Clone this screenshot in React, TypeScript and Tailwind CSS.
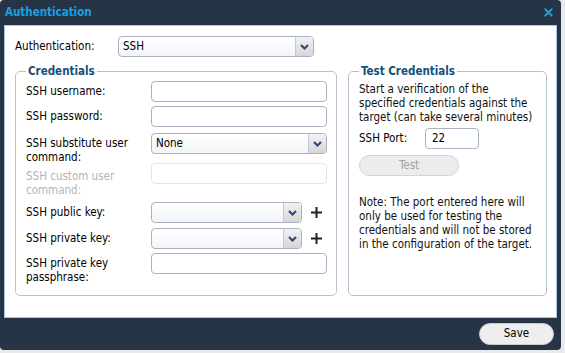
import { X } from "lucide-react";

const font = "font-['DejaVu_Sans_Condensed','Liberation_Sans',sans-serif]";

function Chevron() {
  return (
    <svg width="9" height="6" viewBox="0 0 9 6">
      <polyline points="1,1 4.5,4.5 8,1" fill="none" stroke="#2b4a86" strokeWidth="2.2" />
    </svg>
  );
}

function Select({ value, width }: { value?: string; width: string }) {
  return (
    <div
      className={`${width} h-[21px] flex items-stretch rounded-[4px] border border-[#a9b2c3] bg-gradient-to-b from-white to-[#f3f4f6] overflow-hidden`}
    >
      <div className="flex-1 flex items-center pl-[4px] text-[11.5px] text-black">{value}</div>
      <div className="w-[18px] flex items-center justify-center border-l border-[#c3c9d4] bg-gradient-to-b from-[#f2f2f2] to-[#d6d6d6]">
        <Chevron />
      </div>
    </div>
  );
}

function Input({ width, disabled, value }: { width: string; disabled?: boolean; value?: string }) {
  return (
    <div
      className={`${width} h-[21px] rounded-[4px] border ${
        disabled ? "border-[#e2e5ea]" : "border-[#a9b2c3]"
      } bg-white flex items-center pl-[6px] text-[11.5px] text-black`}
    >
      {value}
    </div>
  );
}

function Row({
  label,
  height,
  disabled,
  children,
}: {
  label: React.ReactNode;
  height: string;
  disabled?: boolean;
  children: React.ReactNode;
}) {
  return (
    <div className={`flex items-start ${height}`}>
      <div
        className={`w-[125px] leading-[14px] text-[11.5px] ${
          disabled ? "pt-[6px] text-[#b4b4b4]" : "pt-[3px] text-black"
        }`}
      >
        {label}
      </div>
      {children}
    </div>
  );
}

function Plus() {
  return (
    <svg width="11" height="11" viewBox="0 0 11 11" className="ml-[9px] mt-[5px]">
      <path d="M5.5 0v11M0 5.5h11" stroke="#222" strokeWidth="2" />
    </svg>
  );
}

export default function App() {
  return (
    <div className={`w-[565px] h-[353px] bg-[#e9eaec] overflow-hidden ${font}`}>
      <div className="w-[561px] h-[350px] bg-[#253546] rounded-[4px] flex flex-col">
        {/* Title bar */}
        <div className="h-[25px] flex items-center justify-between pl-[5px] pr-[6px]">
          <span className="text-[11.5px] font-bold text-[#1aa0e2]">Authentication</span>
          <X size={13} strokeWidth={3.5} color="#1aa0e2" />
        </div>

        {/* Body */}
        <div className="mx-[4px] h-[293px] bg-white border border-[#a7c4e6] pl-[10px] pr-[9px] pt-[10px]">
          <div className="flex items-center h-[21px]">
            <div className="w-[103px] text-[11.5px] text-black">Authentication:</div>
            <Select value="SSH" width="w-[196px]" />
          </div>

          <div className="flex mt-[7px] gap-[11px]">
            {/* Credentials */}
            <fieldset className="w-[322px] h-[232px] shrink-0 border border-[#b9c0cb] rounded-[5px] pl-[10px] pr-[9px] pt-[3px]">
              <legend className="px-[2px] text-[11.5px] leading-[14px] font-bold text-[#14507a]">Credentials</legend>
              <Row label="SSH username:" height="h-[25px]">
                <Input width="w-[176px]" />
              </Row>
              <Row label="SSH password:" height="h-[27px]">
                <Input width="w-[176px]" />
              </Row>
              <Row
                label={
                  <>
                    SSH substitute user
                    <br />
                    command:
                  </>
                }
                height="h-[30px]"
              >
                <Select value="None" width="w-[176px]" />
              </Row>
              <Row
                label={
                  <>
                    SSH custom user
                    <br />
                    command:
                  </>
                }
                height="h-[39px]"
                disabled
              >
                <Input width="w-[176px]" disabled />
              </Row>
              <Row label="SSH public key:" height="h-[26px]">
                <Select width="w-[151px]" />
                <Plus />
              </Row>
              <Row label="SSH private key:" height="h-[25px]">
                <Select width="w-[151px]" />
                <Plus />
              </Row>
              <Row
                label={
                  <>
                    SSH private key
                    <br />
                    passphrase:
                  </>
                }
                height="h-[32px]"
              >
                <Input width="w-[176px]" />
              </Row>
            </fieldset>

            {/* Test Credentials */}
            <fieldset className="w-[199px] h-[232px] shrink-0 border border-[#b9c0cb] rounded-[5px] pl-[10px] pr-[4px] pt-[4px]">
              <legend className="px-[2px] text-[11.5px] leading-[14px] font-bold text-[#14507a]">Test Credentials</legend>
              <p className="text-[11.5px] leading-[14px] text-[#111] whitespace-nowrap">
                Start a verification of the
                <br />
                specified credentials against the
                <br />
                target (can take several minutes)
              </p>
              <div className="flex items-center mt-[4px] h-[21px]">
                <div className="w-[66px] text-[11.5px] text-black">SSH Port:</div>
                <Input width="w-[54px]" value="22" />
              </div>
              <button className="mt-[6px] w-[100px] h-[21px] rounded-full border border-[#d3d3d3] bg-[#ececec] text-[11.5px] text-[#a3a3a3]">
                Test
              </button>
              <p className="mt-[19px] text-[11.5px] leading-[14px] text-[#111] whitespace-nowrap">
                Note: The port entered here will
                <br />
                only be used for testing the
                <br />
                credentials and will not be stored
                <br />
                in the configuration of the target.
              </p>
            </fieldset>
          </div>
        </div>

        {/* Footer */}
        <div className="flex-1 flex items-center justify-end pr-[7px]">
          <button className="w-[75px] h-[22px] rounded-full border border-[#c9c9c9] bg-[#eeeeee] text-[11.5px] text-black">
            Save
          </button>
        </div>
      </div>
    </div>
  );
}
